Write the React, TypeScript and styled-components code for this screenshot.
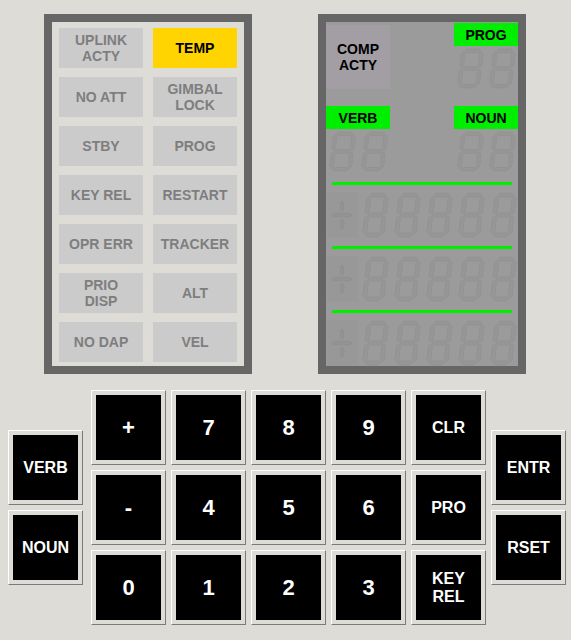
import React from "react";
import styled, { createGlobalStyle } from "styled-components";

const Global = createGlobalStyle`
  html, body { margin: 0; padding: 0; background: #dddcd6; }
  body { font-family: "Liberation Sans", Arial, Helvetica, sans-serif; }
`;

const Page = styled.div`
  width: 571px;
  height: 640px;
  padding-top: 14px;
  box-sizing: border-box;
  background: #dddcd6;
`;

const Panels = styled.div`
  display: flex;
  gap: 66px;
  padding-left: 44px;
`;

const Panel = styled.div`
  width: 208px;
  height: 360px;
  box-sizing: border-box;
  border: 8px solid #666666;
`;

const LampGrid = styled.div`
  height: 100%;
  box-sizing: border-box;
  background: #dddcd6;
  padding: 6px 7px;
  display: grid;
  grid-template-columns: 84px 84px;
  grid-auto-rows: 40px;
  column-gap: 10px;
  row-gap: 9px;
`;

const Lamp = styled.div<{ $on?: boolean }>`
  display: flex;
  align-items: center;
  justify-content: center;
  text-align: center;
  background: ${(p) => (p.$on ? "#ffd400" : "#cbcbcb")};
  color: ${(p) => (p.$on ? "#000000" : "#7e7e7e")};
  font-weight: bold;
  font-size: 14px;
  line-height: 16px;
`;

const Display = styled.div`
  height: 100%;
  box-sizing: border-box;
  background: #9b9b9b;
  overflow: hidden;
  display: flex;
  flex-direction: column;
`;

const TopRow = styled.div`
  height: 84px;
  display: flex;
  justify-content: space-between;
  align-items: flex-start;
`;

const CompActy = styled.div`
  margin-top: 3px;
  width: 64px;
  height: 64px;
  background: #a29ea3;
  color: #000;
  font-weight: bold;
  font-size: 14px;
  line-height: 16px;
  display: flex;
  align-items: center;
  justify-content: center;
  text-align: center;
`;

const Group = styled.div<{ $top?: number }>`
  width: 64px;
  margin-top: ${(p) => p.$top ?? 0}px;
  display: flex;
  flex-direction: column;
`;

const Label = styled.div`
  height: 23px;
  background: #00ee00;
  color: #000;
  font-weight: bold;
  font-size: 14px;
  display: flex;
  align-items: center;
  justify-content: center;
`;

const Pair = styled.div`
  margin-top: 2px;
  height: 41px;
  display: flex;
  gap: 2px;
  padding-left: 1px;
`;

const SecondRow = styled.div`
  display: flex;
  justify-content: space-between;
`;

const GreenLine = styled.div<{ $top: number }>`
  margin: ${(p) => p.$top}px 6px 0 6px;
  height: 3px;
  background: #00ee00;
  flex-shrink: 0;
`;

const DataRow = styled.div`
  margin-top: 7px;
  height: 46px;
  display: flex;
  gap: 2px;
  padding-left: 1px;
  flex-shrink: 0;
`;

const SignBox = styled.div`
  width: 31px;
  height: 46px;
  background: rgba(0, 0, 0, 0.015);
  display: flex;
  align-items: center;
  justify-content: center;
`;

const Keypad = styled.div`
  margin-top: 16px;
  display: flex;
  align-items: center;
  padding-left: 8px;
`;

const SideCol = styled.div<{ $ml: number }>`
  margin-left: ${(p) => p.$ml}px;
  display: flex;
  flex-direction: column;
  gap: 5px;
`;

const KeyGrid = styled.div`
  margin-left: 8px;
  display: grid;
  grid-template-columns: repeat(5, 75px);
  grid-auto-rows: 75px;
  gap: 5px;
`;

const Key = styled.div`
  width: 75px;
  height: 75px;
  box-sizing: border-box;
  border: 1px solid;
  border-color: #ffffff #7a7a7a #7a7a7a #ffffff;
  padding: 4px;
  background: #dddcd6;
`;

const KeyFace = styled.div<{ $big?: boolean }>`
  width: 100%;
  height: 100%;
  background: #000;
  color: #fff;
  font-weight: bold;
  font-size: ${(p) => (p.$big ? "22px" : "16px")};
  line-height: ${(p) => (p.$big ? "24px" : "18px")};
  display: flex;
  align-items: center;
  justify-content: center;
  text-align: center;
`;

const SEG_FILL = "rgba(0,0,0,0.03)";
const SEG_STROKE = "rgba(0,0,0,0.05)";

function hseg(x1: number, x2: number, y: number, t: number): [number, number][] {
  const h = t / 2;
  return [
    [x1, y],
    [x1 + h, y - h],
    [x2 - h, y - h],
    [x2, y],
    [x2 - h, y + h],
    [x1 + h, y + h],
  ];
}

function vseg(x: number, y1: number, y2: number, t: number): [number, number][] {
  const h = t / 2;
  return [
    [x, y1],
    [x + h, y1 + h],
    [x + h, y2 - h],
    [x, y2],
    [x - h, y2 - h],
    [x - h, y1 + h],
  ];
}

const Seg7: React.FC<{ w: number; h: number }> = ({ w, h }) => {
  const t = Math.max(3.5, h * 0.09);
  const k = 0.12;
  const inner = w - h * k - 2;
  const L = 1 + t / 2;
  const R = inner - t / 2;
  const T = 1 + t / 2;
  const B = h - 1 - t / 2;
  const M = h / 2;
  const g = 0.9;
  const segs = [
    hseg(L + g, R - g, T, t),
    vseg(R, T + g, M - g, t),
    vseg(R, M + g, B - g, t),
    hseg(L + g, R - g, B, t),
    vseg(L, M + g, B - g, t),
    vseg(L, T + g, M - g, t),
    hseg(L + g, R - g, M, t),
  ];
  return (
    <svg width={w} height={h} viewBox={`0 0 ${w} ${h}`}>
      {segs.map((s, i) => (
        <polygon
          key={i}
          points={s.map(([x, y]) => `${(x + (h - y) * k + 1).toFixed(2)},${y.toFixed(2)}`).join(" ")}
          fill={SEG_FILL}
          stroke={SEG_STROKE}
          strokeWidth={0.7}
        />
      ))}
    </svg>
  );
};

const Sign: React.FC = () => {
  const t = 3.5;
  const cx = 15;
  const segs = [
    vseg(cx, 9, 19, t),
    hseg(5, 25, 23, t),
    vseg(cx, 27, 37, t),
  ];
  return (
    <svg width={31} height={46} viewBox="0 0 31 46">
      {segs.map((s, i) => (
        <polygon
          key={i}
          points={s.map(([x, y]) => `${x},${y}`).join(" ")}
          fill={SEG_FILL}
          stroke={SEG_STROKE}
          strokeWidth={0.7}
        />
      ))}
    </svg>
  );
};

const DigitPair: React.FC = () => (
  <Pair>
    <Seg7 w={30} h={41} />
    <Seg7 w={30} h={41} />
  </Pair>
);

const Register: React.FC = () => (
  <DataRow>
    <SignBox>
      <Sign />
    </SignBox>
    {[0, 1, 2, 3, 4].map((i) => (
      <Seg7 key={i} w={30} h={46} />
    ))}
  </DataRow>
);

const lamps: { label: React.ReactNode; on?: boolean }[] = [
  { label: <>UPLINK<br />ACTY</> },
  { label: "TEMP", on: true },
  { label: "NO ATT" },
  { label: <>GIMBAL<br />LOCK</> },
  { label: "STBY" },
  { label: "PROG" },
  { label: "KEY REL" },
  { label: "RESTART" },
  { label: "OPR ERR" },
  { label: "TRACKER" },
  { label: <>PRIO<br />DISP</> },
  { label: "ALT" },
  { label: "NO DAP" },
  { label: "VEL" },
];

const keys: { label: React.ReactNode; big?: boolean }[] = [
  { label: "+", big: true },
  { label: "7", big: true },
  { label: "8", big: true },
  { label: "9", big: true },
  { label: "CLR" },
  { label: "-", big: true },
  { label: "4", big: true },
  { label: "5", big: true },
  { label: "6", big: true },
  { label: "PRO" },
  { label: "0", big: true },
  { label: "1", big: true },
  { label: "2", big: true },
  { label: "3", big: true },
  { label: <>KEY<br />REL</> },
];

export default function App() {
  return (
    <Page>
      <Global />
      <Panels>
        <Panel>
          <LampGrid>
            {lamps.map((l, i) => (
              <Lamp key={i} $on={l.on}>
                <span>{l.label}</span>
              </Lamp>
            ))}
          </LampGrid>
        </Panel>
        <Panel>
          <Display>
            <TopRow>
              <CompActy>
                <span>COMP<br />ACTY</span>
              </CompActy>
              <Group $top={1}>
                <Label>PROG</Label>
                <DigitPair />
              </Group>
            </TopRow>
            <SecondRow>
              <Group>
                <Label>VERB</Label>
                <DigitPair />
              </Group>
              <Group>
                <Label>NOUN</Label>
                <DigitPair />
              </Group>
            </SecondRow>
            <GreenLine $top={10} />
            <Register />
            <GreenLine $top={8} />
            <Register />
            <GreenLine $top={8} />
            <Register />
          </Display>
        </Panel>
      </Panels>
      <Keypad>
        <SideCol $ml={0}>
          <Key><KeyFace>VERB</KeyFace></Key>
          <Key><KeyFace>NOUN</KeyFace></Key>
        </SideCol>
        <KeyGrid>
          {keys.map((k, i) => (
            <Key key={i}>
              <KeyFace $big={k.big}>
                <span>{k.label}</span>
              </KeyFace>
            </Key>
          ))}
        </KeyGrid>
        <SideCol $ml={5}>
          <Key><KeyFace>ENTR</KeyFace></Key>
          <Key><KeyFace>RSET</KeyFace></Key>
        </SideCol>
      </Keypad>
    </Page>
  );
}
